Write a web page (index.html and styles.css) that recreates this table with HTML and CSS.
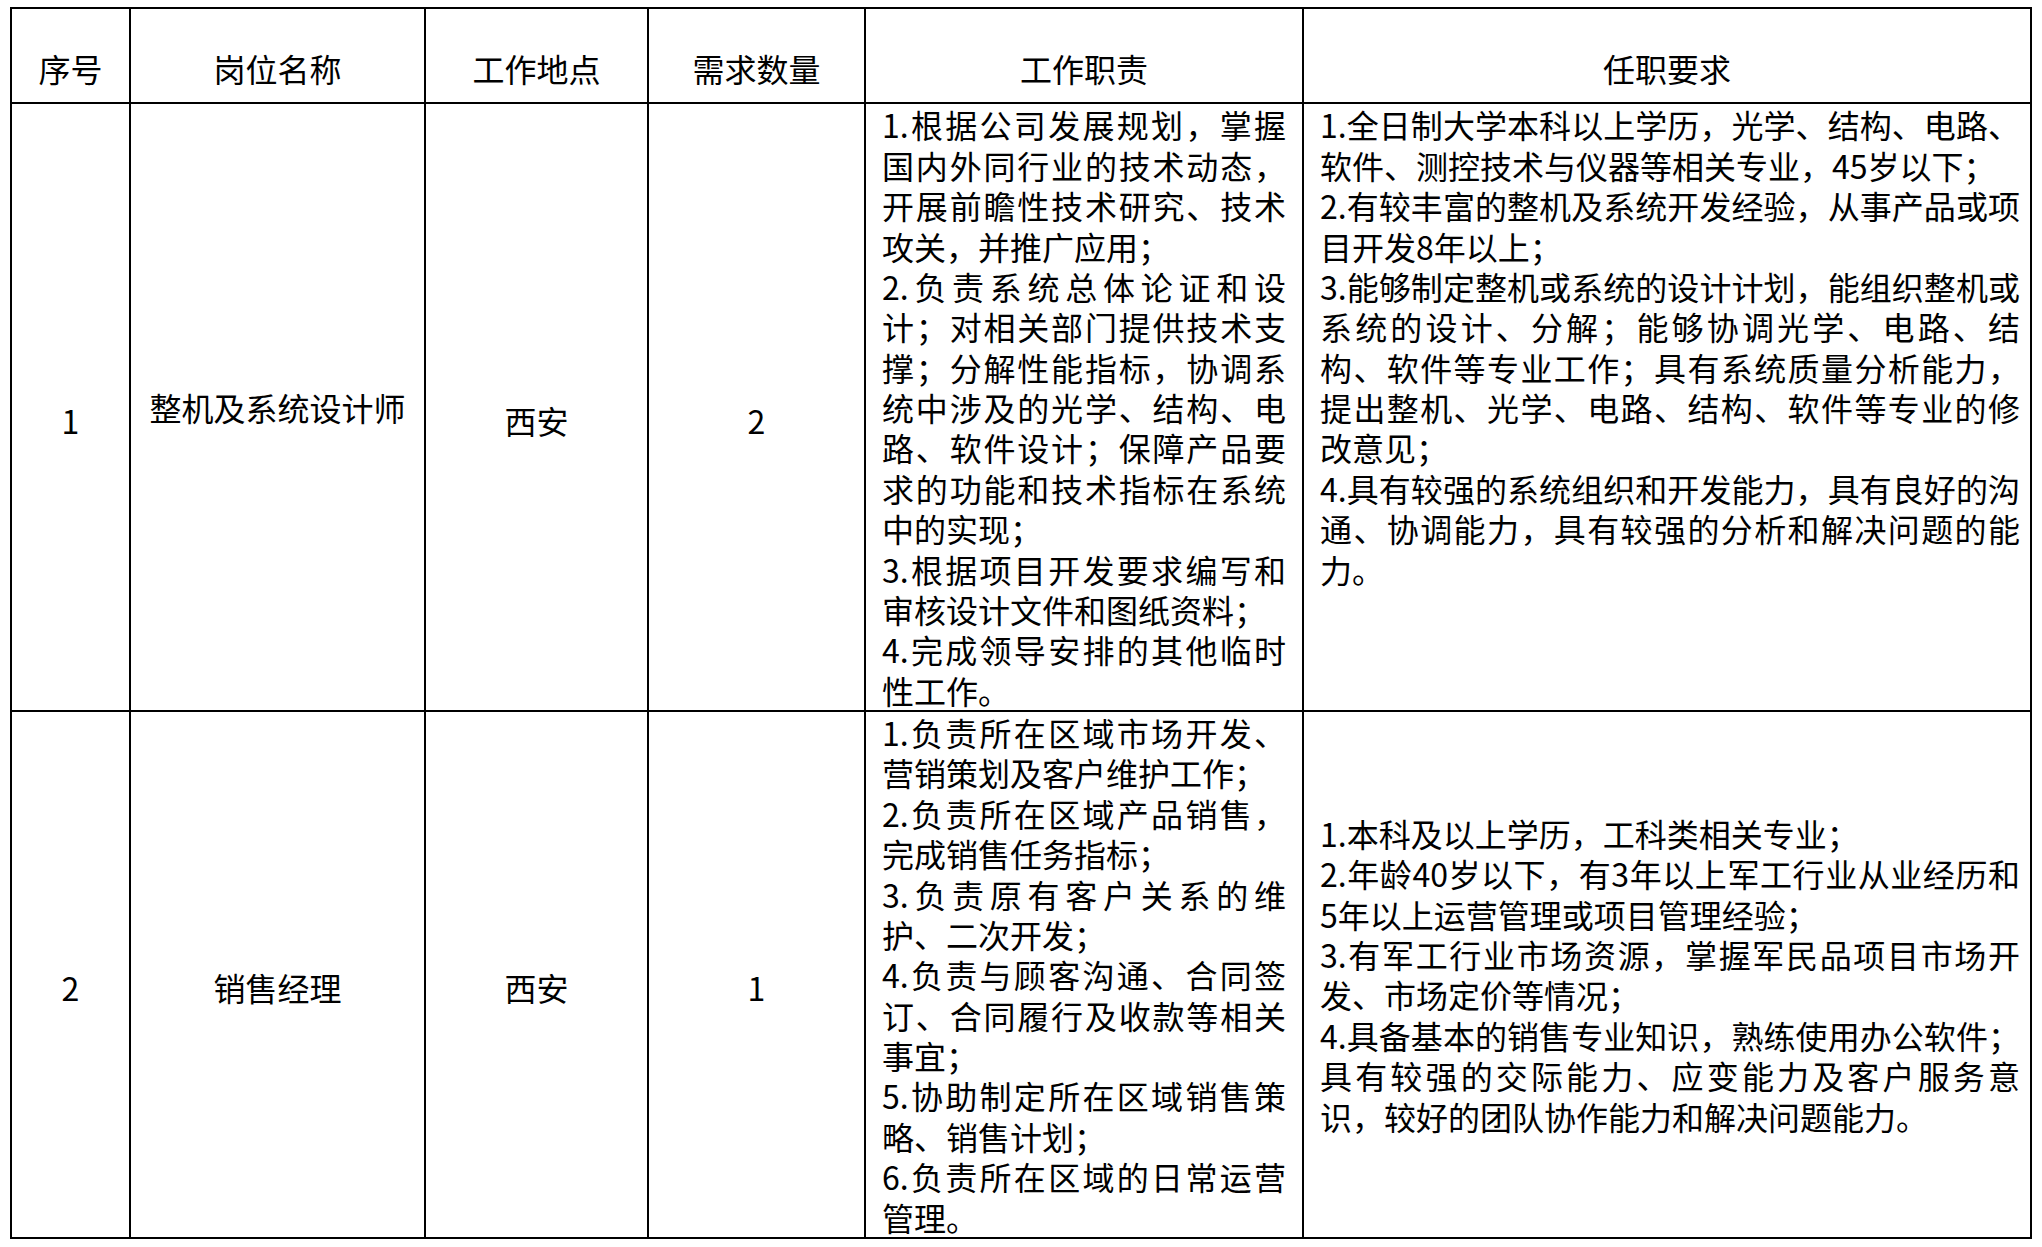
FILE: index.html
```html
<!DOCTYPE html>
<html lang="zh-CN">
<head>
<meta charset="utf-8">
<title>招聘岗位</title>
<link rel="stylesheet" href="styles.css">
</head>
<body>
<table class="jobs">
  <colgroup>
    <col class="c-no">
    <col class="c-name">
    <col class="c-place">
    <col class="c-count">
    <col class="c-duty">
    <col class="c-req">
  </colgroup>
  <thead>
    <tr>
      <th>序号</th>
      <th>岗位名称</th>
      <th>工作地点</th>
      <th>需求数量</th>
      <th>工作职责</th>
      <th>任职要求</th>
    </tr>
  </thead>
  <tbody>
    <tr>
      <td class="mid low">1</td>
      <td class="mid">整机及系统设计师</td>
      <td class="mid low">西安</td>
      <td class="mid low">2</td>
      <td class="text top">1.根据公司发展规划，掌握国内外同行业的技术动态，开展前瞻性技术研究、技术攻关，并推广应用；<br>2.负责系统总体论证和设计；对相关部门提供技术支撑；分解性能指标，协调系统中涉及的光学、结构、电路、软件设计；保障产品要求的功能和技术指标在系统中的实现；<br>3.根据项目开发要求编写和审核设计文件和图纸资料；<br>4.完成领导安排的其他临时性工作。</td>
      <td class="text req top">1.全日制大学本科以上学历，光学、结构、电路、软件、测控技术与仪器等相关专业，45岁以下；<br>2.有较丰富的整机及系统开发经验，从事产品或项目开发8年以上；<br>3.能够制定整机或系统的设计计划，能组织整机或系统的设计、分解；能够协调光学、电路、结构、软件等专业工作；具有系统质量分析能力，提出整机、光学、电路、结构、软件等专业的修改意见；<br>4.具有较强的系统组织和开发能力，具有良好的沟通、协调能力，具有较强的分析和解决问题的能力。</td>
    </tr>
    <tr>
      <td class="mid low">2</td>
      <td class="mid low">销售经理</td>
      <td class="mid low">西安</td>
      <td class="mid low">1</td>
      <td class="text top">1.负责所在区域市场开发、营销策划及客户维护工作；<br>2.负责所在区域产品销售，完成销售任务指标；<br>3.负责原有客户关系的维护、二次开发；<br>4.负责与顾客沟通、合同签订、合同履行及收款等相关事宜；<br>5.协助制定所在区域销售策略、销售计划；<br>6.负责所在区域的日常运营管理。</td>
      <td class="text req center">1.本科及以上学历，工科类相关专业；<br>2.年龄40岁以下，有3年以上军工行业从业经历和5年以上运营管理或项目管理经验；<br>3.有军工行业市场资源，掌握军民品项目市场开发、市场定价等情况；<br>4.具备基本的销售专业知识，熟练使用办公软件；具有较强的交际能力、应变能力及客户服务意识，较好的团队协作能力和解决问题能力。</td>
    </tr>
  </tbody>
</table>
</body>
</html>
```

FILE: styles.css
```css
html, body {
  margin: 0;
  padding: 0;
  background: #ffffff;
}

body {
  padding: 7px 0 0 10px;
  font-family: "Noto Sans CJK SC", "Noto Sans", sans-serif;
  font-size: 32px;
  line-height: 40.37px;
  color: #000000;
}

.jobs {
  border-collapse: collapse;
  table-layout: fixed;
  width: 2020px;
}

.c-no { width: 119px; }
.c-name { width: 295px; }
.c-place { width: 223px; }
.c-count { width: 217px; }
.c-duty { width: 438px; }
.c-req { width: 728px; }

.jobs th,
.jobs td {
  border: 2px solid #000000;
  padding: 0;
  font-weight: 400;
}

.jobs th {
  text-align: center;
  vertical-align: bottom;
  padding: 39px 0 14px;
}

.jobs td.mid {
  text-align: center;
  vertical-align: middle;
}

.jobs td.low {
  padding-top: 25px;
}

.jobs td.text {
  text-align: justify;
  padding: 0 16px;
  text-spacing-trim: space-all;
  line-break: strict;
}

.jobs td.req {
  padding: 0 10px 0 16px;
}

.jobs td.top {
  vertical-align: top;
}

.jobs td.center {
  vertical-align: middle;
}
```
